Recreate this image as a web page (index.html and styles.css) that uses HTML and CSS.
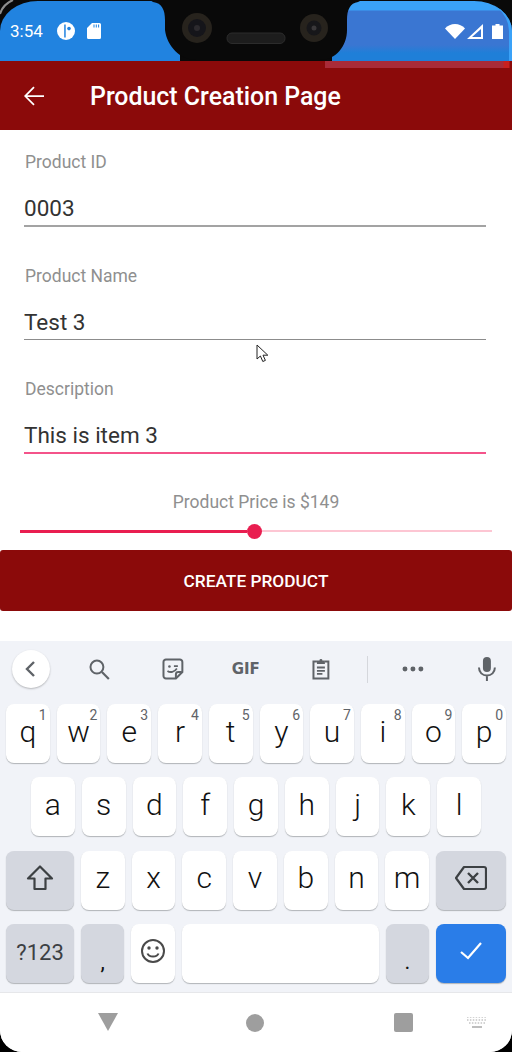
FILE: index.html
```html
<!DOCTYPE html>
<html lang="en">
<head>
    <meta charset="UTF-8">
    <meta name="viewport" content="width=device-width, initial-scale=1.0">
    <title>Product Creation Page</title>
    <link rel="stylesheet" href="styles.css">
</head>
<body>
<div class="screen">

    <!-- status bar with the camera cut-out on top -->
    <div class="status">
        <div class="status-left">
            <span class="time">3:54</span>
            <svg class="icon-pocket" viewBox="0 0 18 18" width="18" height="18"><circle cx="9" cy="9" r="9" fill="#fff"/><path d="M7.200 2.500h1.500v13H7.200z" fill="#2183e0"/><circle cx="12" cy="6.600" r="1.800" fill="#2183e0"/></svg>
            <svg class="icon-sd" viewBox="0 0 14 16" width="14" height="16"><path d="M5 0h7.500A1.500 1.500 0 0 1 14 1.500V14.500A1.500 1.500 0 0 1 12.500 16H1.500A1.500 1.500 0 0 1 0 14.500V5z" fill="#fff"/><path d="M6.500 1.500h1v3h-1zM8.800 1.500h1v3h-1zM11.100 1.500h1v3h-1z" fill="#2183e0"/></svg>
        </div>
        <div class="status-right">
            <svg viewBox="0 0 20 15" width="20" height="15"><path d="M0 4.500C2.600 1.700 6.100 0 10 0s7.400 1.700 10 4.500L10 15z" fill="#fff"/></svg>
            <svg class="icon-signal" viewBox="0 0 16 15" width="16" height="15"><path d="M16 0v15H0zM14 5l-9 8h9z" fill="#fff" fill-rule="evenodd"/></svg>
            <svg class="icon-battery" viewBox="0 0 11 15" width="11" height="15"><path d="M3.500 0h4v1.500H11V15H0V1.500h3.500z" fill="#fff"/></svg>
        </div>
        <svg class="notch" viewBox="0 0 212 61" width="212" height="61">
            <path d="M0 0L3 2C12 3 15 10 15 20V30C17 46 30 60 46 60H170C186 60 197 46 197 30V20C197 10 200 3 208 2L212 0z" fill="#090909"/>
            <circle cx="47" cy="28" r="15" fill="#27231d"/>
            <circle cx="47" cy="28" r="9" fill="#15151a"/>
            <circle cx="47" cy="28" r="3" fill="#2c2a2e"/>
            <circle cx="164" cy="28" r="14" fill="#27231d"/>
            <circle cx="164" cy="28" r="7.500" fill="#17171a"/>
            <circle cx="164" cy="28" r="2.500" fill="#3a383a"/>
            <rect x="77" y="33" width="58" height="10.500" rx="5" fill="#1d1d1d" stroke="#2c2c2c"/>
        </svg>
        <svg class="bezel" viewBox="0 0 16 16" width="16" height="16"><path d="M0 14C2 7 6 3 13 0" fill="none" stroke="#8e8e8e" stroke-width="2"/></svg>
    </div>

    <header class="appbar">
        <div class="appbar-glare"></div>
        <svg class="back" viewBox="0 0 24 24" width="30" height="30"><path d="M20 11.300H6.600l5.900-5.900-1-1L4 12l7.500 7.600 1-1-5.900-5.900H20z" fill="#fff"/></svg>
        <h1>Product Creation Page</h1>
    </header>

    <form class="form">
        <label class="field">
            <span class="field-label">Product ID</span>
            <input class="field-input" type="text" value="0003">
        </label>
        <label class="field">
            <span class="field-label">Product Name</span>
            <input class="field-input thin" type="text" value="Test 3">
        </label>
        <label class="field">
            <span class="field-label">Description</span>
            <input class="field-input focused" type="text" value="This is item 3">
        </label>

        <p class="price">Product Price is $149</p>
        <div class="slider">
            <div class="slider-on"></div>
            <div class="slider-thumb"></div>
            <div class="slider-off"></div>
        </div>

        <button class="create" type="button">CREATE PRODUCT</button>
    </form>

    <svg class="cursor" viewBox="0 0 14 20" width="14" height="20"><path d="M1 1v14l3.400-3 2.400 5.500 2.600-1.100L7 11.200h4.800z" fill="#fff" stroke="#222" stroke-width="1"/></svg>

    <div class="spacer"></div>

    <!-- keyboard -->
    <div class="keyboard">
        <div class="tools">
            <div class="tool-back">
                <svg viewBox="0 0 24 24" width="24" height="24"><path d="M15 5l-7 7 7 7" fill="none" stroke="#5f6368" stroke-width="2.400"/></svg>
            </div>
            <svg class="tool-search" viewBox="0 0 24 24" width="24" height="24"><circle cx="10" cy="10" r="6.500" fill="none" stroke="#5f6368" stroke-width="2"/><path d="M15 15l7 7" stroke="#5f6368" stroke-width="2.200"/></svg>
            <svg class="tool-sticker" viewBox="0 0 24 24" width="24" height="24"><path d="M5 2.500h14A2.500 2.500 0 0 1 21.500 5v10L15 21.500H5A2.500 2.500 0 0 1 2.500 19V5A2.500 2.500 0 0 1 5 2.500z" fill="none" stroke="#5f6368" stroke-width="2"/><path d="M15 21v-3.500a2.500 2.500 0 0 1 2.500-2.500H21" fill="none" stroke="#5f6368" stroke-width="2"/><circle cx="8.500" cy="9.500" r="1.300" fill="#5f6368"/><path d="M13 9h4M6.500 14c3 2 7 1 9.500-2.500" fill="none" stroke="#5f6368" stroke-width="1.800"/></svg>
            <span class="tool-gif">GIF</span>
            <svg class="tool-clip" viewBox="0 0 24 24" width="24" height="24"><path d="M8 4.500H4.500v17h15v-17H16" fill="none" stroke="#5f6368" stroke-width="2"/><path d="M8 3.500h2.500a1.500 1.500 0 0 1 3 0H16V7H8z" fill="#5f6368"/><path d="M8 10.500h8M8 13.800h8M8 17h5.500" stroke="#5f6368" stroke-width="1.800"/></svg>
            <div class="tool-divider"></div>
            <svg class="tool-dots" viewBox="0 0 22 6" width="22" height="6"><circle cx="3" cy="3" r="2.500" fill="#5f6368"/><circle cx="11" cy="3" r="2.500" fill="#5f6368"/><circle cx="19" cy="3" r="2.500" fill="#5f6368"/></svg>
            <svg class="tool-mic" viewBox="0 0 24 26" width="24" height="26"><rect x="8" y="1" width="8" height="15" rx="4" fill="#5f6368"/><path d="M4 11.500c0 5 3.500 8 8 8s8-3 8-8M12 19.500V25" fill="none" stroke="#5f6368" stroke-width="2"/></svg>
        </div>

        <div class="row">
            <div class="key"><sup>1</sup>q</div>
            <div class="key"><sup>2</sup>w</div>
            <div class="key"><sup>3</sup>e</div>
            <div class="key"><sup>4</sup>r</div>
            <div class="key"><sup>5</sup>t</div>
            <div class="key"><sup>6</sup>y</div>
            <div class="key"><sup>7</sup>u</div>
            <div class="key"><sup>8</sup>i</div>
            <div class="key"><sup>9</sup>o</div>
            <div class="key"><sup>0</sup>p</div>
        </div>
        <div class="row row-2">
            <div class="key">a</div>
            <div class="key">s</div>
            <div class="key">d</div>
            <div class="key">f</div>
            <div class="key">g</div>
            <div class="key">h</div>
            <div class="key">j</div>
            <div class="key">k</div>
            <div class="key">l</div>
        </div>
        <div class="row">
            <div class="key wide grey">
                <svg viewBox="0 0 28 28" width="28" height="28"><path d="M14 2.500L26 14.500h-6.500V25h-11V14.500H2z" fill="none" stroke="#3c4043" stroke-width="2.200" stroke-linejoin="round"/></svg>
            </div>
            <div class="key">z</div>
            <div class="key">x</div>
            <div class="key">c</div>
            <div class="key">v</div>
            <div class="key">b</div>
            <div class="key">n</div>
            <div class="key">m</div>
            <div class="key wider grey">
                <svg viewBox="0 0 32 26" width="32" height="26"><path d="M9 2h20a2 2 0 0 1 2 2v18a2 2 0 0 1-2 2H9L1 13z" fill="none" stroke="#3c4043" stroke-width="2.200" stroke-linejoin="round"/><path d="M13 8l10 10M23 8L13 18" stroke="#3c4043" stroke-width="2.400"/></svg>
            </div>
        </div>
        <div class="row">
            <div class="key wide grey sym">?123</div>
            <div class="key grey punct">,</div>
            <div class="key">
                <svg viewBox="0 0 26 26" width="26" height="26"><circle cx="13" cy="13" r="11" fill="none" stroke="#4a4a4a" stroke-width="2"/><circle cx="9" cy="10" r="1.700" fill="#4a4a4a"/><circle cx="17" cy="10" r="1.700" fill="#4a4a4a"/><path d="M7.500 15.500c1.500 4 9.500 4 11 0" fill="none" stroke="#4a4a4a" stroke-width="2"/></svg>
            </div>
            <div class="key space"></div>
            <div class="key grey punct">.</div>
            <div class="key wider enter">
                <svg viewBox="0 0 24 20" width="24" height="20"><path d="M2 11l7 6L22 2" fill="none" stroke="#fff" stroke-width="2.200"/></svg>
            </div>
        </div>
    </div>

    <!-- navigation -->
    <div class="navbar">
        <svg class="nav-back" viewBox="0 0 20 18" width="20" height="18"><path d="M0 0h20L10 18z" fill="#9e9e9e"/></svg>
        <div class="nav-home"></div>
        <div class="nav-recent"></div>
        <svg class="nav-keys" viewBox="0 0 20 11" width="20" height="11"><path d="M0 0h20M0 3h20" stroke="#a8a8a8" stroke-width="1.200" stroke-dasharray="1.500 1.400"/><path d="M2 6h16" stroke="#a8a8a8" stroke-width="1.200" stroke-dasharray="1.500 1.400"/><path d="M5 10h10" stroke="#a8a8a8" stroke-width="1.400"/></svg>
    </div>
</div>
</body>
</html>
```

FILE: styles.css
```css
* {
    box-sizing: border-box;
}
html, body {
    margin: 0;
    padding: 0;
    background-color: #000;
}
body {
    font-family: Roboto, "Liberation Sans", sans-serif;
}
.screen {
    position: relative;
    width: 512px;
    height: 1052px;
    display: flex;
    flex-direction: column;
    background-color: #fff;
    border-radius: 0 0 22px 22px;
    overflow: hidden;
}

/* status bar */
.status {
    position: relative;
    height: 61px;
    flex: none;
    display: flex;
    justify-content: space-between;
    padding-top: 1px;
    background-color: #090909;
}
.status-left {
    width: 180px;
    display: flex;
    align-items: center;
    padding-left: 10px;
    background-color: #2183e0;
    border-top-left-radius: 38px 30px;
}
.time {
    color: #fff;
    font-size: 17px;
    width: 47px;
}
.icon-sd {
    margin-left: 12px;
}
.status-right {
    width: 180px;
    display: flex;
    align-items: center;
    padding-right: 9px;
    justify-content: flex-end;
    background: linear-gradient(#3aa2f8 0, #3aa2f8 9px, #3a76d2 10px, #3a76d2 44px, #1f7fd8 52px);
    border-top-right-radius: 38px 30px;
    box-shadow: inset -7px 0 0 -4px #3aa2f8;
}
.icon-signal {
    margin-left: 2px;
}
.icon-battery {
    margin-left: 9px;
}
.notch {
    position: absolute;
    left: 150px;
    top: 0;
}
.bezel {
    position: absolute;
    left: 0;
    top: 0;
}

/* app bar */
.appbar {
    position: relative;
    height: 69px;
    flex: none;
    display: flex;
    align-items: center;
    padding-left: 19px;
    background-color: #8b0a0a;
}
.appbar-glare {
    position: absolute;
    left: 325px;
    right: 0;
    top: 0;
    height: 7px;
    background: linear-gradient(90deg, #a92b38 0, #a92b38 178px, #c8201e 179px, #c8201e 184px, #8b0a0a 185px);
}
.back {
    flex: none;
}
.appbar h1 {
    margin: 2px 0 0 41px;
    color: #fff;
    font-size: 24.900px;
    font-weight: 500;
}

/* form */
.form {
    display: flex;
    flex-direction: column;
}
.field {
    display: flex;
    flex-direction: column;
    height: 113.500px;
    padding: 23px 26px 0 24px;
}
.field-label {
    margin-left: 1px;
    color: #8f8f8f;
    font-size: 17.500px;
    line-height: 19px;
}
.field-input {
    width: 100%;
    height: 36px;
    margin-top: 19px;
    padding: 0;
    border: none;
    border-bottom: 2px solid #a3a3a3;
    outline: none;
    background: none;
    color: #333;
    font-family: inherit;
    font-size: 22.500px;
}
.field-input.thin {
    border-bottom: 1px solid #8c8c8c;
    height: 35.500px;
}
.field-input.focused {
    border-bottom: 2px solid #f4538a;
    height: 36px;
}
.price {
    margin: 22.500px 0 0;
    text-align: center;
    color: #8f8f8f;
    font-size: 17.500px;
    line-height: 19px;
}
.slider {
    display: flex;
    align-items: center;
    height: 16px;
    margin: 11px 20px 0;
}
.slider-on {
    flex: none;
    width: 227px;
    height: 3px;
    background-color: #e91e50;
}
.slider-thumb {
    flex: none;
    width: 15px;
    height: 15px;
    border-radius: 50%;
    background-color: #e91e50;
}
.slider-off {
    flex: 1;
    height: 2px;
    background-color: #fdc6d3;
}
.create {
    height: 61px;
    margin-top: 11px;
    border: none;
    border-radius: 3px;
    background-color: #8b0a0a;
    color: #fff;
    font-family: inherit;
    font-size: 17.300px;
    font-weight: 500;
}
.cursor {
    position: absolute;
    left: 256px;
    top: 344px;
}
.spacer {
    flex: 1;
}

/* keyboard */
.keyboard {
    flex: none;
    height: 352px;
    background-color: #f1f3f8;
    border-bottom: 1px solid #e6e7ea;
}
.tools {
    display: flex;
    align-items: center;
    height: 63px;
    padding: 0 13px 7px 12px;
}
.tool-back {
    width: 38px;
    height: 38px;
    flex: none;
    display: flex;
    align-items: center;
    justify-content: center;
    border-radius: 50%;
    background-color: #fff;
    box-shadow: 0 1px 2px rgba(0, 0, 0, 0.25);
}
.tool-search { margin-left: 37px; }
.tool-sticker { margin-left: 50px; }
.tool-gif {
    width: 30px;
    margin-left: 47px;
    color: #5f6368;
    font-family: "DejaVu Sans", sans-serif;
    font-size: 15px;
    font-weight: 700;
}
.tool-clip { margin-left: 48px; }
.tool-divider {
    width: 1px;
    height: 27px;
    margin-left: 34px;
    background-color: #d5d7dc;
}
.tool-dots { margin-left: 34px; }
.tool-mic { margin-left: 51px; }

.row {
    display: flex;
    gap: 7px;
    height: 59px;
    margin-bottom: 14.300px;
    padding: 0 6px;
}
.row-2 {
    padding: 0 31px;
}
.key {
    position: relative;
    flex: 1 1 0;
    min-width: 0;
    display: flex;
    align-items: center;
    justify-content: center;
    border-radius: 8px;
    background-color: #fff;
    box-shadow: 0 1px 1px rgba(60, 64, 67, 0.35);
    color: #111;
    font-size: 30px;
    font-weight: 350;
    line-height: 1;
    padding-bottom: 4px;
}
.key sup {
    position: absolute;
    top: 4px;
    right: 3px;
    color: #5f6368;
    font-size: 14px;
    font-weight: 400;
    line-height: 14px;
}
.wide {
    flex: none;
    width: 68px;
}
.wider {
    flex: none;
    width: 70px;
}
.grey {
    background-color: #d4d7df;
}
.sym {
    color: #3c4043;
    font-size: 22px;
    font-weight: 400;
    padding-bottom: 0;
}
.punct {
    align-items: flex-end;
    font-size: 22px;
    font-weight: 400;
    padding-bottom: 10px;
}
.space {
    flex: none;
    width: 197px;
}
.enter {
    background-color: #2a7de8;
}

/* nav bar */
.navbar {
    flex: none;
    height: 59px;
    display: flex;
    align-items: center;
    padding: 0 25px 0 98px;
    background-color: #fff;
}
.nav-back {
    margin-top: -2px;
}
.nav-home {
    width: 18px;
    height: 18px;
    margin-left: 128px;
    border-radius: 50%;
    background-color: #9e9e9e;
}
.nav-recent {
    width: 19px;
    height: 19px;
    margin-left: 130px;
    border-radius: 2px;
    background-color: #9e9e9e;
}
.nav-keys {
    margin-left: 54px;
}
```
